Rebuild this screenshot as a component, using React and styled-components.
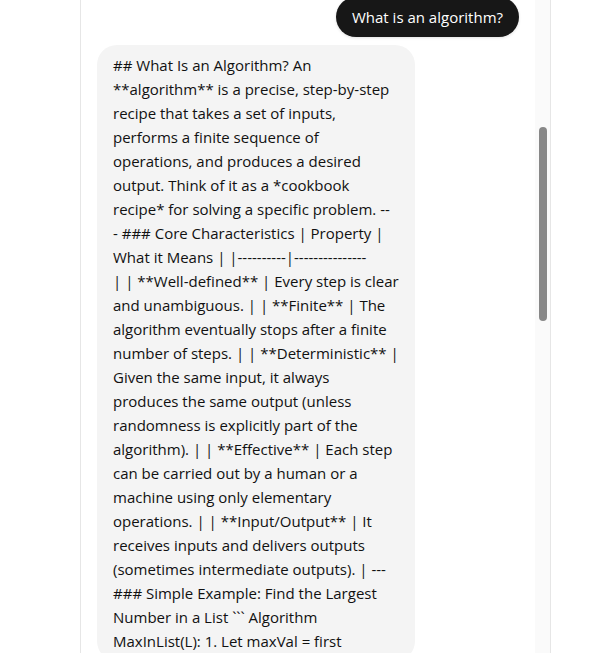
import styled, { createGlobalStyle } from "styled-components";

const GlobalStyle = createGlobalStyle`
  html, body {
    margin: 0;
    padding: 0;
    background: #ffffff;
  }
  body {
    font-family: "Open Sans", "Noto Sans", "Liberation Sans", sans-serif;
  }
`;

const StyledPage = styled.div`
  height: 653px;
  overflow: hidden;
  display: flex;
  background: #ffffff;
`;
const StyledColumn = styled.main`
  margin-left: 80px;
  width: 471px;
  box-sizing: border-box;
  border-left: 1px solid #e6e6e6;
  border-right: 1px solid #e6e6e6;
  display: flex;
`;
const StyledThread = styled.section`
  flex: 1;
  display: flex;
  flex-direction: column;
  gap: 8px;
  padding: 0 16px;
  margin-top: -3px;
`;
const StyledBubble = styled.div`
  box-sizing: border-box;
  border-radius: 20px;
  padding: 8px 16px;
  font-size: 15px;
  line-height: 24px;
  align-self: ${(p) => (p.$mine ? "flex-end" : "flex-start")};
  background: ${(p) => (p.$mine ? "#171717" : "#f4f4f4")};
  color: ${(p) => (p.$mine ? "#ffffff" : "#111111")};
  width: ${(p) => (p.$mine ? "auto" : "318px")};
  box-shadow: ${(p) => (p.$mine ? "0 1px 3px rgba(0,0,0,0.12)" : "none")};
`;
const StyledLine = styled.span`
  display: block;
  white-space: nowrap;
`;
const StyledTrack = styled.div`
  width: 15px;
  background: #fafafa;
  display: flex;
  justify-content: center;
  padding-top: 127px;
`;
const StyledThumb = styled.div`
  width: 8px;
  height: 194px;
  border-radius: 4px;
  background: #888888;
`;

const answer = [
  "## What Is an Algorithm? An",
  "**algorithm** is a precise, step-by-step",
  "recipe that takes a set of inputs,",
  "performs a finite sequence of",
  "operations, and produces a desired",
  "output. Think of it as a *cookbook",
  "recipe* for solving a specific problem. --",
  "- ### Core Characteristics | Property |",
  "What it Means | |----------|---------------",
  "| | **Well-defined** | Every step is clear",
  "and unambiguous. | | **Finite** | The",
  "algorithm eventually stops after a finite",
  "number of steps. | | **Deterministic** |",
  "Given the same input, it always",
  "produces the same output (unless",
  "randomness is explicitly part of the",
  "algorithm). | | **Effective** | Each step",
  "can be carried out by a human or a",
  "machine using only elementary",
  "operations. | | **Input/Output** | It",
  "receives inputs and delivers outputs",
  "(sometimes intermediate outputs). | ---",
  "### Simple Example: Find the Largest",
  "Number in a List ``` Algorithm",
  "MaxInList(L): 1. Let maxVal = first",
];

const App = () => {
  return (
    <>
      <GlobalStyle />
      <StyledPage>
        <StyledColumn>
          <StyledThread>
            <StyledBubble $mine>What is an algorithm?</StyledBubble>
            <StyledBubble>
              {answer.map((line, i) => (
                <StyledLine key={i}>{line}</StyledLine>
              ))}
            </StyledBubble>
          </StyledThread>
          <StyledTrack>
            <StyledThumb />
          </StyledTrack>
        </StyledColumn>
      </StyledPage>
    </>
  );
};

export default App;
